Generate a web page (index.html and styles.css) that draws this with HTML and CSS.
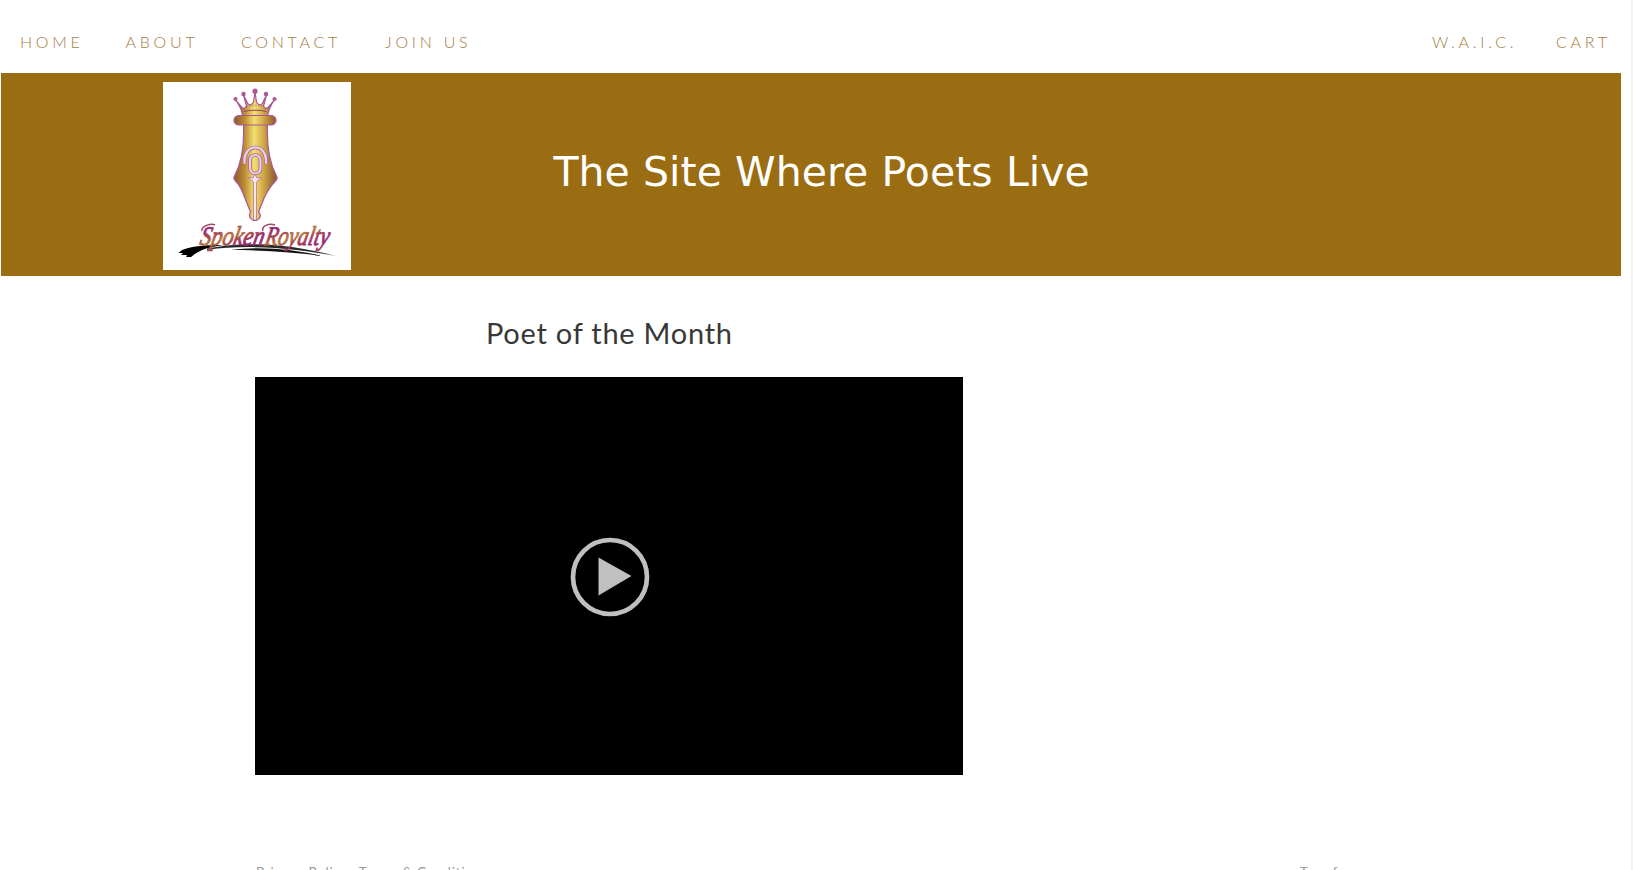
FILE: index.html
```html
<!DOCTYPE html>
<html lang="en">
<head>
<meta charset="utf-8">
<title>Spoken Royalty</title>
<link rel="stylesheet" href="styles.css">
</head>
<body>
<div class="page">
  <nav class="nav">
    <div class="links"><a class="home">HOME</a><a class="about">ABOUT</a><a class="contact">CONTACT</a><a>JOIN US</a></div>
    <div class="links right"><a class="waic">W.A.I.C.</a><a class="cart">CART</a></div>
  </nav>
  <header class="banner">
    <svg class="logo" viewBox="0 0 188 188" role="img" aria-label="Spoken Royalty">
      <defs>
        <linearGradient id="gold" gradientUnits="userSpaceOnUse" x1="71" x2="114" y1="0" y2="0"><stop offset="0" stop-color="#87552a"/><stop offset=".26" stop-color="#bd8c35"/><stop offset=".48" stop-color="#f3df70"/><stop offset=".7" stop-color="#cfa845"/><stop offset="1" stop-color="#87552a"/></linearGradient>
        <linearGradient id="ink" gradientUnits="userSpaceOnUse" x1="0" x2="7" y1="-16" y2="0" spreadMethod="reflect"><stop offset=".2" stop-color="#982b74"/><stop offset=".6" stop-color="#a9484e"/><stop offset="1" stop-color="#b77942"/></linearGradient>
      </defs>
      <path d="M0 0H188V188H0Z" fill="#fff"/>
      <g transform="translate(-.5 0)">
      <g stroke="#a9559a" stroke-width="1.2" stroke-linejoin="round">
        <path d="M73 18L79 25Q82 28 84 24L81 13L85 21Q88 25 91 20L92.500 10L94 20Q97 25 100 21L104 13L101 24Q103 28 106 25L112 18C109 22 106 27 105 35H80C80 27 76 22 73 18Z" fill="url(#gold)"/>
        <path d="M81 42C82 65 79 81 72 94Q70.500 96.500 73 99C78 104 80 109 82 115L88 130C86 133 87 137 91 138.500H94C98 137 99 133 96 130L102 115C105 109 108 104 113 99Q115.500 96.500 114 94C107 81 104 65 105 42Z" fill="url(#gold)"/>
        <rect x="71.500" y="33.500" width="42" height="9.500" rx="4.700" fill="url(#gold)"/>
        <g fill="#b75a78"><circle cx="73" cy="17" r="1.500"/><circle cx="81" cy="12" r="1.600"/><circle cx="92.500" cy="9.200" r="2"/><circle cx="103.500" cy="12" r="1.600"/><circle cx="112" cy="17" r="1.500"/></g>
        <path d="M81 29.500Q93 27 104 29.500" fill="none" stroke="#914b69"/>
        <path d="M84 24.500Q93 22 101 24.500" fill="none" stroke-dasharray="1 2"/>
      </g>
      <g fill="none" stroke-linecap="round">
        <path d="M82 81V78A10.700 12.500 0 0 1 103.500 78V81" stroke="#a95fa3" stroke-width="3.600"/>
        <path d="M82 81V78A10.700 12.500 0 0 1 103.500 78V81" stroke="#e6d0e2" stroke-width="2.300"/>
        <rect x="87.500" y="73" width="10.500" height="18.500" rx="5.200" stroke="#a95fa3" stroke-width="3.600"/>
        <rect x="87.500" y="73" width="10.500" height="18.500" rx="5.200" stroke="#e6d0e2" stroke-width="2.100"/>
      </g>
      <path d="M85.500 95.500L90.500 96L92.500 92L94.500 96L99.500 95.500L94 100V138H91V100Z" fill="#f5e6ef" stroke="#ad6690" stroke-width=".7"/>
      </g>
      <path d="M15.500 171L19 168C33 163 47 163 61 163C45 165 36 168 28 175H23L24 173H18L20 171Z" fill="#000"/>
      <path d="M44 166.500C82 159 125 161 173 174C134 166 83 162 44 168Z" fill="#282828"/>
      <path d="M68 168C97 164 129 167 160 174C130 170 96 168 68 168Z" fill="#111"/>
      <g class="script" fill="url(#ink)" stroke="url(#ink)" stroke-width=".9"><text transform="translate(36 163) skewX(-12)" textLength="64" lengthAdjust="spacingAndGlyphs">Spoken</text><text transform="translate(101 163) skewX(-12)" textLength="64" lengthAdjust="spacingAndGlyphs">Royalty</text></g>
      <path d="M39 149C38 144 48 141 52 143M100 149C98 144 106 141 112 143" fill="none" stroke="#a34763" stroke-width="1.400"/>
    </svg>
    <h1>The Site Where Poets Live</h1>
  </header>
  <main>
    <h2>Poet of the Month</h2>
    <div class="video"><svg viewBox="0 0 80 80" aria-label="Play"><circle cx="40" cy="40" r="37" fill="none" stroke="#c0c0c0" stroke-width="4.700"/><path d="M28.500 20.500V58.500L61.500 39Z" fill="#c0c0c0"/></svg></div>
  </main>
  <footer><div class="policies"><span>Privacy Policy</span><span>Terms &amp; Conditions</span></div><div class="transform">Transform</div></footer>
</div>
</body>
</html>
```
FILE: styles.css
```css
* { box-sizing: border-box; }
body { margin: 0; background: #fff; overflow: hidden; }
.page { width: 1633px; height: 870px; overflow: hidden; border-right: 2px solid #f3f3f3; }
.nav { height: 73px; padding: 32px 19px 0 20px; display: flex; justify-content: space-between; font: 300 16px/20px Lato, sans-serif; letter-spacing: 3.75px; color: #a67d3f; }
.links { display: flex; white-space: nowrap; }
.home { width: 105.5px; }
.about { width: 115.5px; }
.contact { width: 144px; }
.waic { width: 124px; }
.cart { width: 56px; }
.banner { width: 1620px; height: 203px; padding: 9px 0 0 162px; margin-left: 1px; display: flex; background: #9a6d12; }
.logo { width: 188px; height: 188px; flex: none; }
.script { font: italic 400 27px "Liberation Serif", serif; }
h1 { margin: 65px 0 0 202.4px; font: 400 41px/50px "DejaVu Sans", sans-serif; color: #fff; white-space: nowrap; letter-spacing: .07px; }
main { width: 708px; margin-left: 255.4px; }
h2 { margin: 0; padding-top: 35px; height: 101px; text-align: center; font: 400 29px/44px Lato, sans-serif; color: #383838; letter-spacing: .75px; }
.video { height: 398px; padding: 2px 0 0 1px; background: #000; display: flex; align-items: center; justify-content: center; }
.video svg { width: 80px; height: 80px; }
footer { margin: 88px 0 0 256px; width: 1200px; display: flex; font: 400 13.5px/19px Lato, sans-serif; letter-spacing: .8px; color: #999; }
.policies { width: 1044px; display: flex; gap: 10px; }
.transform { font-size: 13px; letter-spacing: .5px; }
```
